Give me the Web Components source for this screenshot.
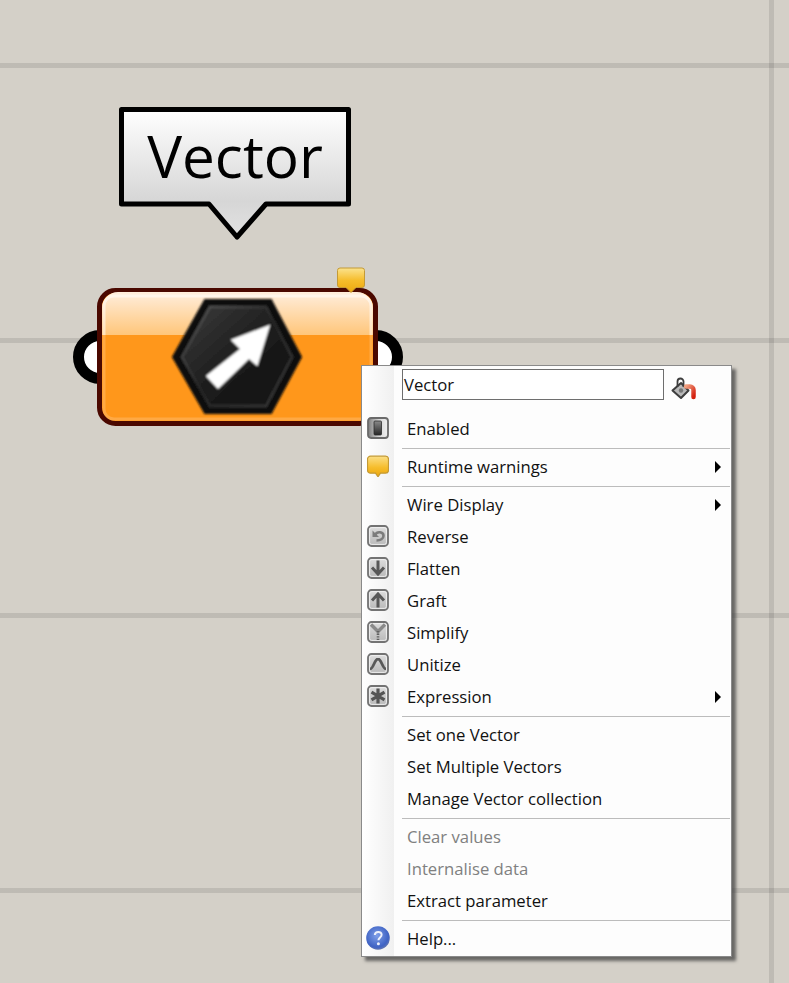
<!DOCTYPE html>
<html>
<head>
<meta charset="utf-8">
<style>
  html, body { margin: 0; padding: 0; background: #d4d0c8; }
</style>
</head>
<body>
<gh-canvas>
  <gh-tooltip>Vector</gh-tooltip>
  <gh-param></gh-param>
  <gh-menu></gh-menu>
</gh-canvas>

<script>
// small button behind every menu icon
const btn = (inner) => `<svg slot="icon" width="22" height="22" viewBox="0 0 22 22">
  <defs><linearGradient id="b" x1="0" y1="0" x2="0" y2="1"><stop offset="0" stop-color="#dedede"/><stop offset="1" stop-color="#b8b8b8"/></linearGradient>
  <filter id="sb"><feGaussianBlur stdDeviation=".35"/></filter></defs>
  <rect x="1" y="1" width="20" height="20" rx="3.500" fill="url(#b)" stroke="#737373" stroke-width="1.800"/>
  <rect x="2.600" y="2.600" width="16.800" height="16.800" rx="2" fill="none" stroke="#f2f2f2" stroke-width=".9"/>
  <g filter="url(#sb)">${inner}</g></svg>`;

const ICONS = {
  enabled: `<svg slot="icon" width="22" height="22" viewBox="0 0 22 22">
    <defs><linearGradient id="e" x1="0" y1="0" x2="1" y2="0"><stop offset="0" stop-color="#7c7c7c"/><stop offset=".55" stop-color="#d8d8d8"/><stop offset="1" stop-color="#f0f0f0"/></linearGradient>
    <linearGradient id="e2" x1="0" y1="0" x2="0" y2="1"><stop offset="0" stop-color="#8a8a8a"/><stop offset="1" stop-color="#262626"/></linearGradient></defs>
    <rect x="1" y="1" width="20" height="20" rx="3" fill="url(#e)" stroke="#6a6a6a" stroke-width="1.800"/>
    <rect x="7" y="4" width="7.500" height="14" rx="1" fill="url(#e2)" stroke="#2c2c2c" stroke-width=".8"/></svg>`,
  warn: `<svg slot="icon" width="22" height="22" viewBox="0 0 22 22">
    <defs><linearGradient id="w" x1="0" y1="0" x2="0" y2="1"><stop offset="0" stop-color="#fbdf86"/><stop offset=".55" stop-color="#f6bd2c"/><stop offset="1" stop-color="#eba60c"/></linearGradient></defs>
    <path d="M3.500 1.200h15a3 3 0 0 1 3 3v11a3 3 0 0 1-3 3h-5L11 21.800 8.500 18.200h-5a3 3 0 0 1-3-3v-11a3 3 0 0 1 3-3z" fill="url(#w)" stroke="#c49a35" stroke-width="1.200"/></svg>`,
  reverse: btn(`<path d="M5.500 5.500v6.500h6.500z" fill="#7c7c7c"/><path d="M8 10c2-4 8.500-3.500 8.500 .8 0 3-3 4.700-7 4.700" fill="none" stroke="#7c7c7c" stroke-width="2.600"/>`),
  flatten: btn(`<path d="M11 3.500v14M5 10.500 11 17l6-6.500" fill="none" stroke="#585858" stroke-width="3"/>`),
  graft: btn(`<path d="M11 18.500v-14M5 11.500 11 5l6 6.500" fill="none" stroke="#585858" stroke-width="3"/>`),
  simplify: btn(`<path d="M4 3.500 11 10.500 18 3.500" fill="none" stroke="#8a8a8a" stroke-width="3.400"/><path d="M11 10v9.500" fill="none" stroke="#606060" stroke-width="2.600" stroke-dasharray="1.300 1.300"/>`),
  unitize: btn(`<path d="M3 16c3.500 0 4.500-10 8-10s4.500 10 8 10" fill="none" stroke="#585858" stroke-width="2.800"/>`),
  expression: btn(`<path d="M11 3.500v15M4.500 7.200l13 7.600M17.500 7.200l-13 7.600" fill="none" stroke="#555" stroke-width="3.200"/>`),
  help: `<svg slot="icon" width="24" height="24" viewBox="0 0 24 24">
    <defs><radialGradient id="h" cx=".45" cy=".4" r=".7"><stop offset="0" stop-color="#7f9fe8"/><stop offset=".7" stop-color="#3f63c4"/><stop offset=".9" stop-color="#6c7cae"/><stop offset="1" stop-color="#a9a9ad"/></radialGradient></defs>
    <circle cx="12" cy="12" r="11.800" fill="url(#h)"/>
    <path d="M8.800 9c.3-4 6.800-4 6.800-.3 0 2.600-3.200 2.800-3.200 5.600" fill="none" stroke="#eef1fb" stroke-width="2"/><circle cx="12.400" cy="17.800" r="1.500" fill="#eef1fb"/></svg>`
};

class GhCanvas extends HTMLElement {
  connectedCallback() {
    this.attachShadow({ mode: 'open' }).innerHTML = `
      <style>
        :host { display: block; position: relative; width: 789px; height: 983px; overflow: hidden;
          background-color: #d4d0c8;
          background-image:
            linear-gradient(rgba(0,0,0,.1), rgba(0,0,0,.1)),
            repeating-linear-gradient(to bottom, transparent 0, transparent 63px, rgba(0,0,0,.1) 63px, rgba(0,0,0,.1) 68px, transparent 68px, transparent 275px);
          background-size: 5px 100%, 100% 100%;
          background-position: 769px 0, 0 0;
          background-repeat: no-repeat;
        }
      </style>
      <slot></slot>`;
  }
}

class GhTooltip extends HTMLElement {
  connectedCallback() {
    this.attachShadow({ mode: 'open' }).innerHTML = `
      <style>
        :host { position: absolute; left: 117px; top: 105px; width: 236px; height: 137px; display: block; }
        svg { position: absolute; inset: 0; }
        div { position: relative; height: 100px; display: flex; justify-content: center; align-items: center;
          font: 58.500px "Open Sans", sans-serif; color: #000; box-sizing: border-box; }
      </style>
      <svg width="236" height="137" viewBox="0 0 236 137">
        <defs><linearGradient id="t" x1="0" y1="0" x2="0" y2="1"><stop offset="0" stop-color="#fff"/><stop offset=".72" stop-color="#d6d6d6"/><stop offset="1" stop-color="#e2e2e2"/></linearGradient></defs>
        <path d="M4.500 4.500H231.500V99H149L120 132 92 99H4.500z" fill="url(#t)" stroke="#000" stroke-width="5" stroke-linejoin="round"/>
      </svg>
      <div><slot></slot></div>`;
  }
}

class GhParam extends HTMLElement {
  connectedCallback() {
    this.attachShadow({ mode: 'open' }).innerHTML = `
      <style>
        :host { position: absolute; left: 70px; top: 262px; width: 336px; height: 168px; display: block; }
        svg { display: block; }
      </style>
      <svg width="336" height="168" viewBox="70 262 336 168">
        <defs>
          <linearGradient id="top" x1="0" y1="0" x2="0" y2="1"><stop offset="0" stop-color="#ffeedd"/><stop offset="1" stop-color="#ffc67a"/></linearGradient>
          <linearGradient id="bub" x1="0" y1="0" x2="0" y2="1"><stop offset="0" stop-color="#fbe38e"/><stop offset=".5" stop-color="#f6bd2c"/><stop offset="1" stop-color="#eda80e"/></linearGradient>
          <linearGradient id="hex" x1="0" y1="0" x2="1" y2="1"><stop offset="0" stop-color="#3c3c3c"/><stop offset=".55" stop-color="#1b1b1b"/><stop offset="1" stop-color="#101010"/></linearGradient>
          <linearGradient id="hexs" x1="0" y1="0" x2="1" y2="1"><stop offset="0" stop-color="#5c5c5c"/><stop offset=".5" stop-color="#262626"/><stop offset="1" stop-color="#3c3c3c"/></linearGradient>
          <filter id="soft" x="-10%" y="-10%" width="120%" height="120%"><feGaussianBlur stdDeviation="1.200"/></filter>
        </defs>
        <circle cx="100" cy="357" r="21.500" fill="#fff" stroke="#000" stroke-width="11"/>
        <circle cx="376" cy="357" r="21.500" fill="#fff" stroke="#000" stroke-width="11"/>
        <rect x="99.500" y="290.500" width="276" height="133" rx="16" fill="#ff971b" stroke="#4a0800" stroke-width="5"/>
        <path d="M102 335V308a16 16 0 0 1 16-16H357a16 16 0 0 1 16 16V335z" fill="url(#top)"/>
        <path d="M104 335V306a10 10 0 0 1 10-10H361a10 10 0 0 1 10 10V335" fill="none" stroke="#fff" stroke-opacity=".5" stroke-width="3"/>
        <path d="M104 335V409a10 10 0 0 0 10 10H361a10 10 0 0 0 10-10V335" fill="none" stroke="#fff" stroke-opacity=".18" stroke-width="3"/>
        <g filter="url(#soft)">
          <path d="M173 357 205 300H271L301 357 271 413H205z" fill="#111" stroke="#111" stroke-width="2"/>
          <path d="M182 357 210 307H266L292 357 266 406H210z" fill="url(#hex)" stroke="url(#hexs)" stroke-width="2.500"/>
          <path d="M269 326 232 340 241 349 207 376 218 388 249 358 257 365z" fill="#fff" stroke="#fff" stroke-width="1.500"/>
        </g>
        <path d="M340 268h22a2.500 2.500 0 0 1 2.500 2.500v14.500a2.500 2.500 0 0 1-2.500 2.500h-6l-5 5-5-5h-6a2.500 2.500 0 0 1-2.500-2.500V270.500a2.500 2.500 0 0 1 2.500-2.500z" fill="url(#bub)" stroke="#c49a35"/>
      </svg>`;
  }
}

class GhMenu extends HTMLElement {
  connectedCallback() {
    this.attachShadow({ mode: 'open' }).innerHTML = `
      <style>
        :host { position: absolute; left: 361px; top: 365px; width: 369px; display: block;
          border: 1px solid #8a8a8a;
          box-shadow: 4px 4px 3px rgba(70,70,70,.75);
          background: linear-gradient(to right, #fff 0, #f0f0f0 32px, #fdfdfd 32px);
          font: 16.700px "Open Sans", sans-serif; color: #111; padding: 3px 0 2px; }
      </style>
      <slot></slot>`;
  }
}

class GhNamebox extends HTMLElement {
  connectedCallback() {
    this.attachShadow({ mode: 'open' }).innerHTML = `
      <style>
        :host { display: flex; align-items: flex-start; gap: 7px; padding-left: 40px; height: 32px; margin-bottom: 11px; }
        .box { width: 259px; height: 29px; border: 1px solid #6e6e6e; background: #fff; padding-left: 1px;
          line-height: 29px; flex: none; }
        svg { display: block; margin-top: 8px; }
      </style>
      <div class="box"></div>
      <svg width="26" height="25" viewBox="0 0 26 25">
        <defs><linearGradient id="r" x1="0" y1="0" x2="1" y2="1"><stop offset="0" stop-color="#f0a080"/><stop offset="1" stop-color="#d42010"/></linearGradient>
        <filter id="pb"><feGaussianBlur stdDeviation=".4"/></filter></defs>
        <g filter="url(#pb)">
        <path d="M1.500 13.500 10 6l7.500 7.500L10 21z" fill="#b8b8b8" stroke="#3c3c3c" stroke-width="2" stroke-linejoin="round"/>
        <path d="M6.500 10V4.500a3 3 0 0 1 6 0V10" fill="none" stroke="#3c3c3c" stroke-width="1.800"/>
        <circle cx="10" cy="13.500" r="2.200" fill="#777"/>
        <path d="M15 9.500h4a3.500 3.500 0 0 1 3.500 3.500v7" fill="none" stroke="url(#r)" stroke-width="4.500" stroke-linecap="round"/>
        </g>
      </svg>`;
    this.shadowRoot.querySelector('.box').textContent = this.getAttribute('value');
  }
}

class GhItem extends HTMLElement {
  connectedCallback() {
    this.attachShadow({ mode: 'open' }).innerHTML = `
      <style>
        :host { display: flex; align-items: center; height: 32px; }
        :host([disabled]) { color: #808080; }
        .icon { width: 32px; display: flex; justify-content: center; flex: none; }
        .label { padding-left: 13px; flex: 1; white-space: nowrap; }
        .arrow { width: 0; height: 0; border-left: 6px solid #000; border-top: 6px solid transparent; border-bottom: 6px solid transparent; margin: 1px 10px 0 0; }
        :host(:not([sub])) .arrow { display: none; }
      </style>
      <div class="icon"><slot name="icon"></slot></div>
      <div class="label"><slot></slot></div>
      <div class="arrow"></div>`;
  }
}

class GhSep extends HTMLElement {
  connectedCallback() {
    this.attachShadow({ mode: 'open' }).innerHTML = `
      <style>
        :host { display: block; height: 1px; background: #bcbcbc; margin: 4px 1px 1px 40px; }
      </style>`;
  }
}

customElements.define('gh-canvas', GhCanvas);
customElements.define('gh-tooltip', GhTooltip);
customElements.define('gh-param', GhParam);
customElements.define('gh-menu', GhMenu);
customElements.define('gh-namebox', GhNamebox);
customElements.define('gh-item', GhItem);
customElements.define('gh-sep', GhSep);

const rows = [
  ['Enabled', 'enabled'], '-',
  ['Runtime warnings', 'warn', 'sub'], '-',
  ['Wire Display', null, 'sub'],
  ['Reverse', 'reverse'], ['Flatten', 'flatten'], ['Graft', 'graft'],
  ['Simplify', 'simplify'], ['Unitize', 'unitize'], ['Expression', 'expression', 'sub'], '-',
  ['Set one Vector'], ['Set Multiple Vectors'], ['Manage Vector collection'], '-',
  ['Clear values', null, 'disabled'], ['Internalise data', null, 'disabled'], ['Extract parameter'], '-',
  ['Help...', 'help']
];
const menu = document.querySelector('gh-menu');
menu.innerHTML = '<gh-namebox value="Vector"></gh-namebox>' + rows.map(r => {
  if (r === '-') return '<gh-sep></gh-sep>';
  const [label, icon, flag] = r;
  return `<gh-item ${flag || ''}>${icon ? ICONS[icon] : ''}${label}</gh-item>`;
}).join('');
</script>
</body>
</html>
